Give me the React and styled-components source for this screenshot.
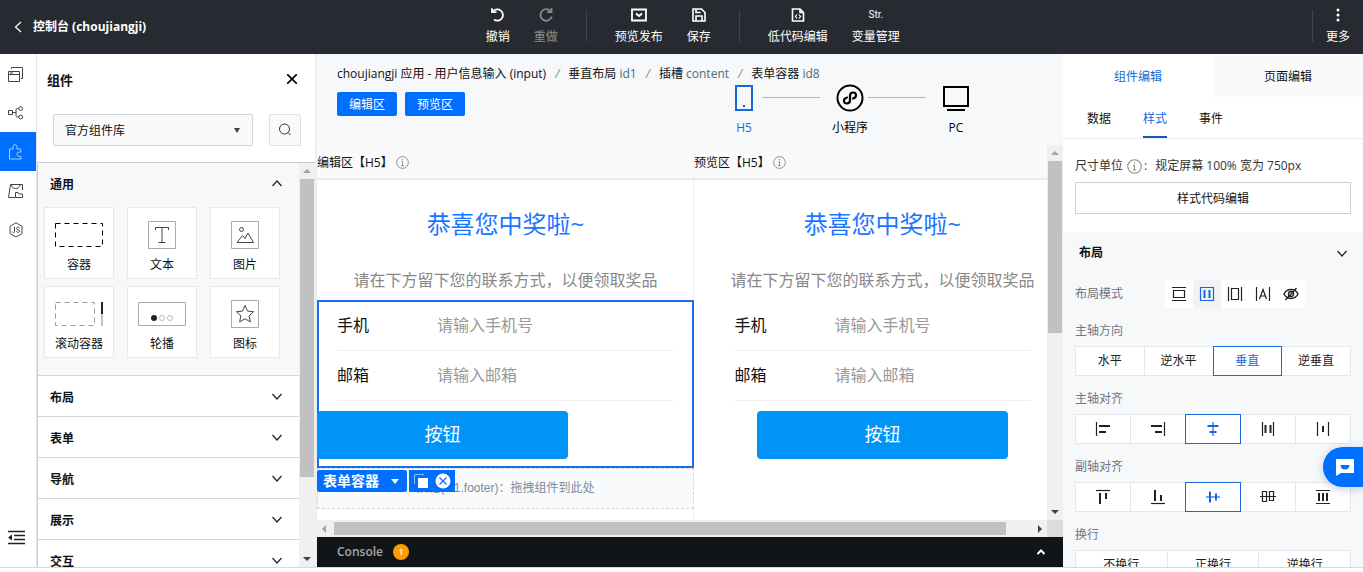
import { useState } from 'react';
import styled, { createGlobalStyle } from 'styled-components';

const RAIL = ['pages', 'tree', 'widgets', 'assets', 'node'];

const TILES = [
    { name: '容器', art: 'box' },
    { name: '文本', art: 'text' },
    { name: '图片', art: 'image' },
    { name: '滚动容器', art: 'scroll' },
    { name: '轮播', art: 'swiper' },
    { name: '图标', art: 'star' },
];

const GROUPS = ['布局', '表单', '导航', '展示', '交互'];

const App = () => {
    const [rail, setRail] = useState('widgets');

    return (
        <>
            <GlobalStyle />
            <Page>
                <TopBar />
                <Body>
                    <Rail>
                        {RAIL.map((name) => (
                            <RailButton key={name} aria-label={name} $active={rail === name} onClick={() => setRail(name)}>
                                <RailIcon name={name} />
                            </RailButton>
                        ))}
                        <RailSpacer />
                        <RailButton aria-label="collapse"><RailIcon name="collapse" /></RailButton>
                    </Rail>
                    <WidgetPanel />
                    <Workspace />
                    <StylePanel />
                </Body>
            </Page>
            <ChatButton aria-label="chat">
                <svg width="18" height="17" viewBox="0 0 18 17">
                    <path d="M0 0h18v14H5l-5 3z" fill="#fff" />
                    <path d="M4.500 6h9c0 3-2 4.500-4.500 4.500S4.500 9 4.500 6z" fill="#006eff" />
                </svg>
            </ChatButton>
        </>
    )
}

const TopBar = () => (
    <Header>
        <Back href="#console">
            <svg width="8" height="12" viewBox="0 0 8 12" fill="none" stroke="#fff" strokeWidth="1.200"><path d="M7 1L1.500 6 7 11" /></svg>
            控制台 (choujiangji)
        </Back>
        <Tools>
            <Tool>
                <Glyph>
                    <svg width="16" height="16" viewBox="0 0 16 16" fill="none" stroke="currentColor" strokeWidth="1.800">
                        <path d="M3 4.500A5.600 5.600 0 1 1 4 12.500" /><path d="M2 1.200v4h4.500" />
                    </svg>
                </Glyph>
                撤销
            </Tool>
            <Tool disabled>
                <Glyph>
                    <svg width="16" height="16" viewBox="0 0 16 16" fill="none" stroke="currentColor" strokeWidth="1.800">
                        <path d="M12.500 4A5.800 5.800 0 1 0 13.800 9.500" /><path d="M13.500 1v4.200H9" />
                    </svg>
                </Glyph>
                重做
            </Tool>
            <Divider />
            <Tool>
                <Glyph>
                    <svg width="16" height="14" viewBox="0 0 16 14" fill="none" stroke="currentColor" strokeWidth="1.800">
                        <path d="M1 1.500h14v11H1z" /><path d="M5 5.500l3 2.500 3-2.500" strokeWidth="2" />
                    </svg>
                </Glyph>
                预览发布
            </Tool>
            <Tool>
                <Glyph>
                    <svg width="14" height="14" viewBox="0 0 14 14" fill="none" stroke="currentColor" strokeWidth="1.600">
                        <path d="M1 1h8.500L13 4.500V13H1z" /><path d="M4 13V8h6v5M4 1v3.500h4.500" />
                    </svg>
                </Glyph>
                保存
            </Tool>
            <Divider />
            <Tool>
                <Glyph>
                    <svg width="14" height="14" viewBox="0 0 14 14" fill="none" stroke="currentColor" strokeWidth="1.600">
                        <path d="M1.500 1H9l3.500 3.500V13h-11zM9 1v3.500h3.500" /><path d="M6 6.500L4.500 8.500l1.500 2M8 6.500l1.500 2-1.500 2" strokeWidth="1.200" />
                    </svg>
                </Glyph>
                低代码编辑
            </Tool>
            <Tool>
                <Glyph>Str.</Glyph>
                变量管理
            </Tool>
        </Tools>
        <More>
            <Divider />
            <Tool>
                <Glyph>
                    <svg width="4" height="14" viewBox="0 0 4 14" fill="currentColor">
                        <circle cx="2" cy="2" r="1.500" /><circle cx="2" cy="7" r="1.500" /><circle cx="2" cy="12" r="1.500" />
                    </svg>
                </Glyph>
                更多
            </Tool>
        </More>
    </Header>
)

const WidgetPanel = () => (
    <Widgets>
        <WidgetsHead>
            <h2>组件</h2>
            <IconButton aria-label="close">
                <svg width="10" height="10" viewBox="0 0 10 10" stroke="#000" strokeWidth="1.600"><path d="M0 0l10 10M10 0L0 10" /></svg>
            </IconButton>
        </WidgetsHead>
        <LibraryRow>
            <SelectWrap>
                <LibrarySelect aria-label="组件库" defaultValue="official">
                    <option value="official">官方组件库</option>
                </LibrarySelect>
                <svg width="6" height="6" viewBox="0 0 6 6" fill="#444"><path d="M0 1h6L3 6z" /></svg>
            </SelectWrap>
            <SearchButton aria-label="search">
                <svg width="14" height="14" viewBox="0 0 14 14" fill="none" stroke="#333"><circle cx="6.500" cy="6" r="5" /><path d="M10 9.500l2.500 2.500" /></svg>
            </SearchButton>
        </LibraryRow>
        <WidgetsScroll>
            <WidgetList>
                <Group $open>
                    <GroupHead><span>通用</span><Chevron up /></GroupHead>
                    <TileGrid>
                        {TILES.map((tile) => (
                            <Tile key={tile.name}>
                                <TileArt name={tile.art} />
                                {tile.name}
                            </Tile>
                        ))}
                    </TileGrid>
                </Group>
                {GROUPS.map((name) => (
                    <Group key={name}>
                        <GroupHead><span>{name}</span><Chevron /></GroupHead>
                    </Group>
                ))}
            </WidgetList>
            <VScroll size="80%" />
        </WidgetsScroll>
    </Widgets>
)

const Workspace = () => {
    const [device, setDevice] = useState('H5');

    return (
        <Main>
            <Crumbs aria-label="breadcrumb">
                <span>choujiangji 应用 - 用户信息输入 (input)</span><i>/</i>
                <span>垂直布局 <a href="#id1">id1</a></span><i>/</i>
                <span>插槽 <a href="#content">content</a></span><i>/</i>
                <span>表单容器 <a href="#id8">id8</a></span>
            </Crumbs>
            <ViewBar>
                <ViewButton>编辑区</ViewButton>
                <ViewButton>预览区</ViewButton>
                <Devices>
                    <Device $active={device === 'H5'} onClick={() => setDevice('H5')}>
                        <DeviceIcon name="phone" />H5
                    </Device>
                    <DeviceLine />
                    <Device $active={device === 'mini'} onClick={() => setDevice('mini')}>
                        <DeviceIcon name="mini" />小程序
                    </Device>
                    <DeviceLine />
                    <Device $active={device === 'PC'} onClick={() => setDevice('PC')}>
                        <DeviceIcon name="pc" />PC
                    </Device>
                </Devices>
            </ViewBar>
            <CanvasArea>
                <Canvas>
                    <Screen>
                        <ScreenTitle>编辑区【H5】<Info size={13} /></ScreenTitle>
                        <ScreenBody $edge>
                            <Headline>恭喜您中奖啦~</Headline>
                            <Notice>请在下方留下您的联系方式，以便领取奖品</Notice>
                            <FormBox $selected>
                                <Fields id="edit" />
                                <Submit type="button">按钮</Submit>
                                <Handle>
                                    <HandleName type="button">
                                        表单容器
                                        <svg width="8" height="5" viewBox="0 0 8 5" fill="#fff"><path d="M0 0h8L4 5z" /></svg>
                                    </HandleName>
                                    <HandleTools>
                                        <button type="button" aria-label="copy">
                                            <svg width="14" height="14" viewBox="0 0 14 14"><path d="M.5 10V.5H10" fill="none" stroke="#8fc1ff" /><path d="M4 4h10v10H4z" fill="#fff" /></svg>
                                        </button>
                                        <button type="button" aria-label="delete">
                                            <svg width="16" height="16" viewBox="0 0 16 16"><circle cx="8" cy="8" r="7.500" fill="#fff" /><path d="M4.500 4.500l7 7M11.500 4.500l-7 7" stroke="#006eff" strokeWidth="1.200" /></svg>
                                        </button>
                                    </HandleTools>
                                </Handle>
                            </FormBox>
                            <Slot>插槽(id1.footer)：拖拽组件到此处</Slot>
                        </ScreenBody>
                    </Screen>
                    <Screen>
                        <ScreenTitle>预览区【H5】<Info size={13} /></ScreenTitle>
                        <ScreenBody>
                            <Headline>恭喜您中奖啦~</Headline>
                            <Notice>请在下方留下您的联系方式，以便领取奖品</Notice>
                            <FormBox>
                                <Fields id="preview" />
                                <Submit type="button">按钮</Submit>
                            </FormBox>
                        </ScreenBody>
                    </Screen>
                </Canvas>
                <VScroll size="50%" />
            </CanvasArea>
            <HScroll>
                <Arrow dir="left" light />
                <HTrack><HThumb /></HTrack>
                <Arrow dir="right" />
                <Corner />
            </HScroll>
            <ConsoleBar>
                Console
                <Badge>1</Badge>
                <svg width="8" height="6" viewBox="0 0 8 6" fill="none" stroke="#fff" strokeWidth="2"><path d="M.5 5L4 1.500 7.500 5" /></svg>
            </ConsoleBar>
        </Main>
    )
}

const Fields = ({ id }) => (
    <>
        <Field>
            <label htmlFor={id + '-phone'}>手机</label>
            <input id={id + '-phone'} placeholder="请输入手机号" />
        </Field>
        <Field>
            <label htmlFor={id + '-mail'}>邮箱</label>
            <input id={id + '-mail'} placeholder="请输入邮箱" />
        </Field>
    </>
)

const StylePanel = () => {
    const [mode, setMode] = useState('flex');

    return (
        <Aside>
            <Tabs>
                <Tab $active>组件编辑</Tab>
                <Tab>页面编辑</Tab>
            </Tabs>
            <SubTabs>
                <SubTab>数据</SubTab>
                <SubTab $active>样式</SubTab>
                <SubTab>事件</SubTab>
            </SubTabs>
            <UnitBox>
                <UnitRow>尺寸单位<Info size={15} />:<span>规定屏幕 100% 宽为 750px</span></UnitRow>
                <CodeButton>样式代码编辑</CodeButton>
            </UnitBox>
            <Section>
                <SectionHead>布局<Chevron /></SectionHead>
                <ModeRow>
                    布局模式
                    <Modes>
                        {['block', 'flex', 'inline-block', 'inline', 'none'].map((name) => (
                            <Mode key={name} aria-label={name} $active={mode === name} onClick={() => setMode(name)}>
                                <ModeIcon name={name} />
                            </Mode>
                        ))}
                    </Modes>
                </ModeRow>
                <Option label="主轴方向" items={['水平', '逆水平', '垂直', '逆垂直']} start={2} />
                <Option label="主轴对齐" icons items={['m-start', 'm-end', 'm-center', 'm-between', 'm-around']} start={2} />
                <Option label="副轴对齐" icons items={['c-start', 'c-end', 'c-center', 'c-baseline', 'c-stretch']} start={2} />
                <Option label="换行" items={['不换行', '正换行', '逆换行']} />
            </Section>
        </Aside>
    )
}

const Option = ({ label, items, icons, start = -1 }) => {
    const [value, setValue] = useState(start);

    return (
        <OptionBox>
            <OptionLabel>{label}</OptionLabel>
            <Segments role="group" aria-label={label}>
                {items.map((item, i) => (
                    <Segment key={item} $active={i === value} onClick={() => setValue(i)} aria-label={item}>
                        {icons ? <AlignIcon name={item} /> : item}
                    </Segment>
                ))}
            </Segments>
        </OptionBox>
    )
}

const VScroll = ({ size }) => (
    <VBar>
        <Arrow dir="up" light />
        <VTrack><VThumb $size={size} /></VTrack>
        <Arrow dir="down" />
    </VBar>
)

// icons ----------------------
const ARROWS = {
    up: 'M0 6h8L4 2z',
    down: 'M0 2h8L4 6z',
    left: 'M6 0v8L2 4z',
    right: 'M2 0v8l4-4z',
};

const Arrow = ({ dir, light }) => (
    <ArrowBox>
        <svg width="8" height="8" viewBox="0 0 8 8" fill={light ? '#a3a3a3' : '#404040'}><path d={ARROWS[dir]} /></svg>
    </ArrowBox>
)

const Chevron = ({ up }) => (
    <svg width="10" height="7" viewBox="0 0 10 7" fill="none" stroke="#222" strokeWidth="1.200">
        <path d={up ? 'M.5 6L5 1l4.500 5' : 'M.5 1L5 6l4.500-5'} />
    </svg>
)

const Info = ({ size }) => (
    <svg width={size} height={size} viewBox="0 0 14 14" fill="none" stroke="#888">
        <circle cx="7" cy="7" r="6.300" /><path d="M7 3.200v1.500M5.800 6.200H7v4M5.500 10.300h3" />
    </svg>
)

const RAIL_ART = {
    pages: <><path d="M.5 5.500h11v10H.5zM.5 8.500h11M3.500 3V1.500h11v11H13" /><path d="M2 7h3" /></>,
    tree: <><path d="M.5 5.500h4v4h-4zM4.500 7.500H8M11 3.500H9.500Q8 3.500 8 5v5.500Q8 12 9.500 12H11" /><circle cx="12.700" cy="3.500" r="1.900" /><circle cx="12.700" cy="12" r="1.900" /></>,
    widgets: <path d="M1.500 5h3.700C4.300 2.300 5.500.7 7 .7s2.700 1.600 1.800 4.300h4.200v3c-2.800-.3-4 .8-4 2.200s1.200 2.500 4 2.200v2.600H1.500z" />,
    assets: <><path d="M14.500 7V1.500H2.500L.5 14.500H7M3.500 2c0 4.500 8 5 8.500 0" /><path d="M7.500 14.500v-5h2.500l1 1.500h3.500v3.500z" /></>,
    node: <><path d="M8 .8l6 3.500v7.200L8 15l-6-3.500V4.300z" /><path d="M6.500 5v4.500c0 1.500-2 1.500-2 .2M11.500 6c-.8-1.300-3-1-3 .4 0 1.700 3.200 1 3.200 2.800 0 1.500-2.700 1.500-3.300.2" /></>,
    collapse: <><path d="M0 1.500h17M6 5.500h11M6 9.500h11M0 13.500h17" stroke="#222" strokeWidth="1.500" /><path d="M4 4.500v6L0 7.500z" fill="#222" stroke="none" /></>,
};

const RailIcon = ({ name }) => (
    <svg width="17" height="16" viewBox="0 0 17 16" fill="none" stroke="currentColor">{RAIL_ART[name]}</svg>
)

const TILE_ART = {
    box: <path d="M.5.5h47v23h-47z" stroke="#000" strokeDasharray="5 4" />,
    text: <><path d="M10.500-1.500h27v27h-27z" stroke="#aaa" /><path d="M17.500 7V4.500h13V7M24 4.500v15M20.500 19.500h7" /></>,
    image: <><path d="M10.500-1.500h27v27h-27z" stroke="#aaa" /><circle cx="20.500" cy="6.500" r="2" /><path d="M16 19.500l5.500-7 2.500 3 3-5.500 5.500 9.500z" /></>,
    scroll: <><path d="M.5.5h39v23H.5z" stroke="#999" strokeDasharray="5 4" /><path d="M47 12v12" stroke="#aaa" strokeWidth="1.500" /><path d="M47 0v12" stroke="#222" strokeWidth="2" /></>,
    swiper: <><path d="M.5.500h47v23h-47z" stroke="#aaa" /><circle cx="16" cy="16" r="3" fill="#222" stroke="none" /><circle cx="24" cy="16" r="2.500" stroke="#bbb" /><circle cx="32" cy="16" r="2.500" stroke="#bbb" /></>,
    star: <><path d="M10.500-1.500h27v27h-27z" stroke="#aaa" /><path d="M24 3.500l2.600 5.600 6 .6-4.500 4.200 1.300 6L24 16.800l-5.400 3.100 1.300-6-4.500-4.200 6-.6z" /></>,
};

const TileArt = ({ name }) => (
    <svg width="48" height="24" viewBox="0 0 48 24" fill="none" stroke="#444" overflow="visible">{TILE_ART[name]}</svg>
)

const DEVICE_ART = {
    phone: <><path d="M6 2h16v24H6z" strokeWidth="2" /><path d="M13 22h2" strokeWidth="2" /></>,
    mini: <><circle cx="14" cy="14" r="12.500" strokeWidth="2" /><path d="M11 13.500c-4 1-4 6-.3 6 2 0 3.300-1.200 3.300-3.200v-4.600c0-2 1.500-3.200 3.300-3.200 3.700 0 3.700 5-.3 6" strokeWidth="2.200" strokeLinecap="round" /></>,
    pc: <><path d="M2 3h24v19H2z" strokeWidth="2" /><path d="M5 26h18" strokeWidth="2" /></>,
};

const DeviceIcon = ({ name }) => (
    <svg width="28" height="28" viewBox="0 0 28 28" fill="none" stroke="currentColor">{DEVICE_ART[name]}</svg>
)

const MODE_ART = {
    block: <path d="M1 1.500h14M2.500 4.500h11v7h-11zM1 14.500h14" />,
    flex: <><path d="M1.500 1.500h13v13h-13z" /><path d="M5.500 4v8M10.500 4v8" strokeWidth="2" /></>,
    'inline-block': <path d="M1.500 1v14M4.500 2.500h7v11h-7zM14.500 1v14" />,
    inline: <path d="M1.500 1v14M14.500 1v14M4.500 13L8 3.500l3.500 9.500M5.700 10h4.600" />,
    none: <><path d="M1 8c3-6 11-6 14 0-3 6-11 6-14 0zM13.500 2L2.500 14" strokeWidth="1.400" /><circle cx="8" cy="8" r="2.500" strokeWidth="1.400" /></>,
};

const ModeIcon = ({ name }) => (
    <svg width="16" height="16" viewBox="0 0 16 16" fill="none" stroke="currentColor" strokeWidth="1.200">{MODE_ART[name]}</svg>
)

const ALIGN_ART = {
    'm-start': <><path d="M1.500 1v14" /><path d="M4 5h11M4 11h7" strokeWidth="2" /></>,
    'm-end': <><path d="M14.500 1v14" /><path d="M1 5h11M5 11h7" strokeWidth="2" /></>,
    'm-center': <><path d="M8 1v14" /><path d="M2.500 5h11M4.500 11h7" strokeWidth="2" /></>,
    'm-between': <><path d="M2.500 1v14M13.500 1v14" /><path d="M5.500 4v8M10.500 4v8" strokeWidth="2" /></>,
    'm-around': <><path d="M2.500 1v14M13.500 1v14" /><path d="M8 5v6" strokeWidth="2" /></>,
    'c-start': <><path d="M1 1.500h14" /><path d="M5 4v11M11 4v6" strokeWidth="2" /></>,
    'c-end': <><path d="M1 14.500h14" /><path d="M5 1v11M11 6v6" strokeWidth="2" /></>,
    'c-center': <><path d="M1 8h14" /><path d="M5 2.500v11M11 4.500v7" strokeWidth="2" /></>,
    'c-baseline': <path d="M0 7.500h16M2.500 2.500h4v10h-4zM9.500 2.500h4v9h-4z" />,
    'c-stretch': <><path d="M1 1.500h14M1 14.500h14" /><path d="M4 4v8M8 4v8M12 4v8" strokeWidth="2" /></>,
};

const AlignIcon = ({ name }) => (
    <svg width="16" height="16" viewBox="0 0 16 16" fill="none" stroke="currentColor" strokeWidth="1.200">{ALIGN_ART[name]}</svg>
)

// styles ----------------------
const GlobalStyle = createGlobalStyle`
    * {
        box-sizing: border-box;
    }
    body {
        margin: 0;
        background: #fff;
        color: #111;
        font-family: 'Open Sans', 'Noto Sans CJK SC', sans-serif;
        font-size: 12px;
        line-height: 18px;
    }
    button, input, select {
        margin: 0;
        padding: 0;
        border: none;
        border-radius: 0;
        background: none;
        color: inherit;
        font: inherit;
    }
    button {
        cursor: pointer;
    }
    a {
        color: inherit;
        text-decoration: none;
    }
    svg {
        flex: none;
    }
`

const Page = styled.div`
    height: 100vh;
    padding-bottom: 4px;
    display: flex;
    flex-direction: column;
    overflow: hidden;
`

const Header = styled.header`
    flex: none;
    height: 54px;
    display: grid;
    grid-template-columns: 105fr auto 100fr;
    background: #272b31;
    color: #fff;
`

const Back = styled.a`
    display: flex;
    align-items: center;
    gap: 11px;
    padding-left: 14px;
    font-weight: 700;
`

const Tools = styled.nav`
    padding-bottom: 2px;
    display: flex;
    align-items: center;
`

const More = styled(Tools)`
    justify-content: flex-end;
    & > button {
        padding: 0 13px;
    }
    & > span {
        margin: 0;
    }
`

const Tool = styled.button`
    padding: 0 12px;
    display: flex;
    flex-direction: column;
    align-items: center;
    gap: 4px;
    opacity: ${(props) => props.disabled ? 0.45 : 1};
`

const Glyph = styled.span`
    height: 18px;
    display: flex;
    align-items: center;
    font: 10px/18px Roboto, sans-serif;
`

const Divider = styled.span`
    width: 1px;
    height: 32px;
    margin: 0 16px;
    background: #3f444b;
`

const Body = styled.div`
    flex: 1;
    min-height: 0;
    display: flex;
    border-bottom: 1px solid #d8d8d8;
`

const Rail = styled.nav`
    flex: none;
    width: 37px;
    display: flex;
    flex-direction: column;
    border-right: 1px solid #e5e8ed;
    padding-bottom: 10px;
`

const RailButton = styled.button`
    height: 39px;
    padding-right: 3px;
    display: flex;
    align-items: center;
    justify-content: center;
    color: ${(props) => props.$active ? '#9fd0ff' : '#444'};
    background: ${(props) => props.$active ? '#006eff' : 'transparent'};
`

const RailSpacer = styled.div`
    flex: 1;
`

const Widgets = styled.section`
    flex: none;
    width: 280px;
    display: flex;
    flex-direction: column;
    border-right: 2px solid #eceef1;
`

const WidgetsHead = styled.div`
    height: 50px;
    padding: 0 16px 0 10px;
    display: flex;
    align-items: center;
    justify-content: space-between;
    h2 {
        margin: 0;
        padding-top: 2px;
        font-size: 13px;
    }
`

const IconButton = styled.button`
    display: flex;
    padding: 2px;
`

const LibraryRow = styled.div`
    height: 58px;
    padding: 10px 14px 0 16px;
    display: flex;
    gap: 16px;
`

const SelectWrap = styled.div`
    flex: 1;
    height: 32px;
    position: relative;
    svg {
        position: absolute;
        right: 13px;
        top: 13px;
        pointer-events: none;
    }
`

const LibrarySelect = styled.select`
    width: 100%;
    height: 32px;
    padding: 2px 11px 0;
    appearance: none;
    border: 1px solid #cfd5de;
    border-radius: 2px;
    background: #fafafa;
`

const SearchButton = styled.button`
    width: 32px;
    height: 32px;
    display: flex;
    align-items: center;
    justify-content: center;
    border: 1px solid #dcdfe4;
    border-radius: 2px;
    background: #fafafa;
`

const WidgetsScroll = styled.div`
    flex: 1;
    min-height: 0;
    display: flex;
    border-top: 1px solid #ccc;
    border-left: 1px solid #ccc;
`

const WidgetList = styled.div`
    flex: 1;
    overflow: hidden;
`

const Group = styled.div`
    border-bottom: 1px solid #d5d5d5;
    background: ${(props) => props.$open ? '#f6f8fa' : '#fff'};
`

const GroupHead = styled.button`
    width: 100%;
    height: 40px;
    padding: 0 17px 0 12px;
    display: flex;
    align-items: center;
    justify-content: space-between;
    font-weight: 700;
    span {
        padding-top: 4px;
    }
`

const TileGrid = styled.div`
    padding: 4px 19px 17px 6px;
    display: grid;
    grid-template-columns: repeat(3, 1fr);
    gap: 7px 13px;
`

const Tile = styled.button`
    height: 72px;
    padding-top: 11px;
    display: flex;
    flex-direction: column;
    align-items: center;
    justify-content: center;
    gap: 9px;
    border: 1px solid #e6e8eb;
    background: #fff;
    white-space: nowrap;
`

const Main = styled.main`
    flex: 1;
    min-width: 0;
    display: flex;
    flex-direction: column;
    background: #f6f8fa;
`

const Crumbs = styled.nav`
    height: 38px;
    padding: 2px 0 0 20px;
    display: flex;
    align-items: center;
    white-space: nowrap;
    a {
        color: #4a6a76;
    }
    i {
        margin: 0 9px;
        color: #888;
    }
`

const ViewBar = styled.div`
    height: 53px;
    padding-left: 20px;
    display: flex;
    align-items: flex-start;
    gap: 8px;
`

const ViewButton = styled.button`
    width: 60px;
    height: 24px;
    padding-top: 2px;
    border-radius: 2px;
    background: #006eff;
    color: #fff;
`

const Devices = styled.div`
    margin: -8px 89px 0 auto;
    display: flex;
`

const Device = styled.button`
    width: 36px;
    display: flex;
    flex-direction: column;
    align-items: center;
    gap: 7px;
    white-space: nowrap;
    color: ${(props) => props.$active ? '#1668dc' : '#000'};
`

const DeviceLine = styled.div`
    width: 58px;
    height: 1px;
    margin: 13px 12px 0 0;
    background: #b5b9bf;
`

const CanvasArea = styled.div`
    flex: 1;
    min-height: 0;
    display: flex;
`

const Canvas = styled.div`
    flex: 1;
    display: flex;
    overflow: hidden;
    background: #fff;
`

const Screen = styled.section`
    flex: none;
    width: 377px;
`

const ScreenTitle = styled.div`
    height: 35px;
    padding-top: 2px;
    display: flex;
    align-items: center;
    gap: 3px;
    border-bottom: 2px solid #ebebeb;
    background: #fafafa;
`

const ScreenBody = styled.div`
    height: 100%;
    padding-top: 20px;
    box-shadow: ${(props) => props.$edge ? 'inset -1px 0 0 #eee' : 'none'};
`

const Headline = styled.h1`
    margin: 0;
    color: #1a75ff;
    font-size: 24px;
    font-weight: 400;
    line-height: 48px;
    text-align: center;
`

const Notice = styled.p`
    margin: 0;
    padding-top: 12px;
    color: #888;
    font-size: 16px;
    line-height: 40px;
    text-align: center;
`

const FormBox = styled.form`
    position: relative;
    height: 168px;
    display: flex;
    flex-direction: column;
    align-items: ${(props) => props.$selected ? 'flex-start' : 'center'};
    padding-top: 1px;
    box-shadow: ${(props) => props.$selected ? 'inset 0 0 0 2px #1a6eeb' : 'none'};
    & > div:nth-child(-n+2) {
        width: ${(props) => props.$selected ? '336px' : '296px'};
        margin: ${(props) => props.$selected ? '0 20px' : 0};
    }
`

const Field = styled.div`
    flex: none;
    height: 50px;
    padding-bottom: 2px;
    display: flex;
    align-items: center;
    border-bottom: 1px solid #eee;
    font-size: 16px;
    label {
        width: 100px;
    }
    input {
        flex: 1;
        min-width: 0;
        outline: none;
    }
    input::placeholder {
        color: #999;
    }
`

const Submit = styled.button`
    width: 251px;
    height: 48px;
    margin-top: 10px;
    padding-bottom: 2px;
    border-radius: 4px;
    background: #0094f7;
    color: #fff;
    font-size: 18px;
`

const Handle = styled.div`
    position: absolute;
    left: 0;
    top: 170px;
    display: flex;
    gap: 2px;
`

const HandleName = styled.button`
    width: 90px;
    height: 22px;
    padding: 0 8px 0 6px;
    display: flex;
    align-items: center;
    justify-content: space-between;
    border-radius: 2px;
    background: #006eff;
    color: #fff;
    font-size: 14px;
    font-weight: 700;
`

const HandleTools = styled.div`
    width: 46px;
    height: 22px;
    padding: 0 4px 0 5px;
    display: flex;
    align-items: center;
    justify-content: space-between;
    background: #006eff;
    button {
        display: flex;
    }
`

const Slot = styled.div`
    height: 41px;
    border: 1px dashed #d5d9df;
    background: #f9fafc;
    color: #7c8a9c;
    font-family: 'Liberation Sans', 'Noto Sans CJK SC', sans-serif;
    line-height: 39px;
    text-align: center;
`

const VBar = styled.div`
    flex: none;
    width: 16px;
    padding: 0 1px;
    display: flex;
    flex-direction: column;
    background: #f0f0f0;
`

const VTrack = styled.div`
    flex: 1;
`

const VThumb = styled.div`
    height: ${(props) => props.$size};
    background: #c1c1c1;
`

const ArrowBox = styled.div`
    flex: none;
    min-width: 14px;
    min-height: 16px;
    display: flex;
    align-items: center;
    justify-content: center;
`

const HScroll = styled.div`
    flex: none;
    height: 17px;
    display: flex;
    background: #f0f0f0;
`

const HTrack = styled.div`
    flex: 1;
    padding: 2px 6px 2px 3px;
`

const HThumb = styled.div`
    width: 97%;
    height: 100%;
    background: #c1c1c1;
`

const Corner = styled.div`
    width: 16px;
    background: #dcdcdc;
`

const ConsoleBar = styled.div`
    flex: none;
    height: 30px;
    padding: 0 18px 0 20px;
    display: flex;
    align-items: center;
    gap: 10px;
    background: #121518;
    color: #a5a8ab;
    font-weight: 600;
    svg {
        margin-left: auto;
    }
`

const Badge = styled.span`
    width: 16px;
    height: 16px;
    border-radius: 50%;
    background: #ff9d00;
    color: #fff;
    font-size: 9px;
    line-height: 16px;
    text-align: center;
`

const Aside = styled.aside`
    flex: none;
    width: 300px;
    display: flex;
    flex-direction: column;
    overflow: hidden;
    background: #fff;
`

const Tabs = styled.div`
    flex: none;
    height: 43px;
    display: flex;
`

const Tab = styled.button`
    flex: 1;
    padding-top: 2px;
    color: ${(props) => props.$active ? '#1668dc' : '#111'};
    background: ${(props) => props.$active ? '#fff' : '#fafafa'};
`

const SubTabs = styled.div`
    flex: none;
    height: 42px;
    padding-left: 24px;
    display: flex;
    gap: 32px;
    border-bottom: 1px solid #e9ebee;
`

const SubTab = styled.button`
    padding-top: 4px;
    border-bottom: 2px solid ${(props) => props.$active ? '#1259b8' : 'transparent'};
    color: ${(props) => props.$active ? '#1668dc' : '#111'};
`

const UnitBox = styled.div`
    flex: none;
    padding: 9px 12px 18px;
`

const UnitRow = styled.div`
    height: 34px;
    padding-top: 2px;
    display: flex;
    align-items: center;
    color: #333;
    svg {
        margin: 0 2px 0 4px;
    }
    span {
        margin-left: 8px;
    }
`

const CodeButton = styled.button`
    width: 100%;
    height: 32px;
    padding-top: 2px;
    border: 1px solid #cfcfcf;
`

const Section = styled.section`
    flex: 1;
    padding: 0 12px;
    background: #f6f8fa;
`

const SectionHead = styled.button`
    width: 100%;
    height: 42px;
    padding: 0 4px;
    display: flex;
    align-items: center;
    justify-content: space-between;
    font-weight: 700;
`

const ModeRow = styled.div`
    height: 40px;
    display: flex;
    align-items: center;
    gap: 42px;
    color: #6f7680;
`

const Modes = styled.div`
    display: flex;
    background: #fff;
`

const Mode = styled.button`
    width: 28px;
    height: 28px;
    display: flex;
    align-items: center;
    justify-content: center;
    color: ${(props) => props.$active ? '#1668dc' : '#222'};
    background: ${(props) => props.$active ? '#f0f2f5' : '#fff'};
`

const OptionBox = styled.div`
    height: 68px;
`

const OptionLabel = styled.div`
    padding: 8px 0 6px;
    color: #6f7680;
`

const Segments = styled.div`
    padding-left: 1px;
    display: flex;
`

const Segment = styled.button`
    position: relative;
    z-index: ${(props) => props.$active ? 1 : 0};
    flex: 1;
    height: 30px;
    margin-left: -1px;
    display: flex;
    align-items: center;
    justify-content: center;
    border: 1px solid ${(props) => props.$active ? '#1668dc' : '#e4e7eb'};
    color: ${(props) => props.$active ? '#1668dc' : '#222'};
    background: #fff;
`

const ChatButton = styled.button`
    position: fixed;
    z-index: 2;
    right: 0;
    top: 447px;
    width: 40px;
    height: 40px;
    padding-left: 4px;
    display: flex;
    align-items: center;
    justify-content: center;
    border-radius: 20px 0 0 20px;
    background: #006eff;
    box-shadow: 0 2px 10px rgba(0, 60, 160, 0.25);
`

export default App;
